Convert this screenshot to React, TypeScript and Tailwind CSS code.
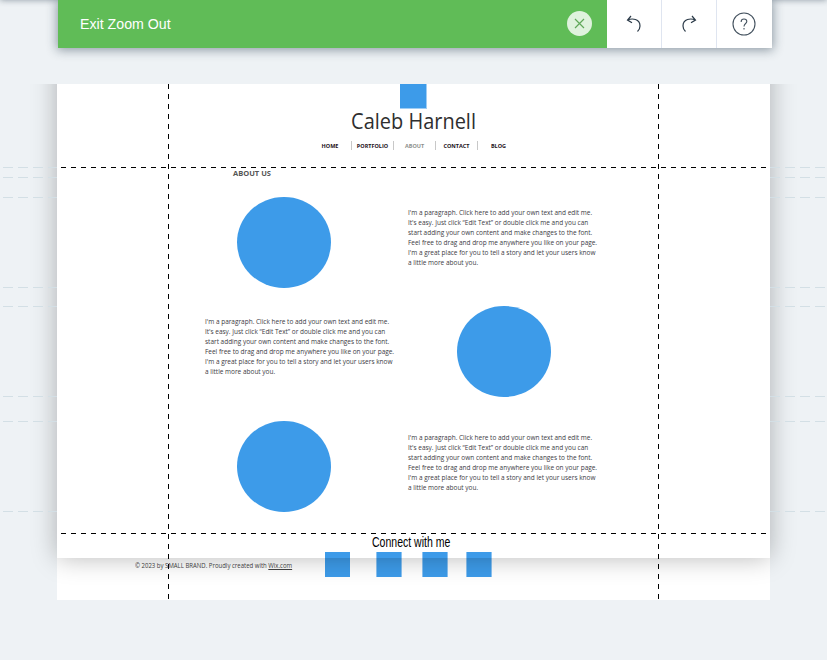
import type { ReactNode } from "react";

const LINES = [
  "I'm a paragraph. Click here to add your own text and edit me.",
  "It's easy. Just click “Edit Text” or double click me and you can",
  "start adding your own content and make changes to the font.",
  "Feel free to drag and drop me anywhere you like on your page.",
  "I'm a great place for you to tell a story and let your users know",
  "a little more about you.",
];

const GUIDES = [83, 93, 113, 203, 222, 312, 337, 427];

function Paragraph() {
  return (
    <div className="w-[192px] whitespace-nowrap text-[6.47px] leading-[10px] text-[#3c3c44]">
      {LINES.map((line) => (
        <p key={line}>{line}</p>
      ))}
    </div>
  );
}

function Circle() {
  return <div className="mr-[0.5px] h-[91px] w-[93.5px] shrink-0 rounded-[50%] bg-[#3d9be9]" />;
}

function ToolButton({ children, last = false }: { children: ReactNode; last?: boolean }) {
  return (
    <button
      className={
        last
          ? "flex h-12 flex-1 items-center justify-center bg-white pr-px pb-px"
          : "flex h-12 w-[55px] items-center justify-center border-r border-[#dfe5f0] bg-white pb-px"
      }
    >
      {children}
    </button>
  );
}

function TopBar() {
  return (
    <header className="relative z-10 ml-[58px] flex h-12 w-[714px] shadow-[0_1px_10px_1px_rgba(22,45,61,0.45)]">
      <div className="flex w-[549px] items-center justify-between bg-[#60bc57] pr-[15px] pl-[22px]">
        <span className="font-['Liberation_Sans',sans-serif] text-[14.2px] leading-5 text-white">Exit Zoom Out</span>
        <span className="mb-[2px] flex size-[25px] items-center justify-center rounded-full bg-[#dff2dd]">
          <svg width="11" height="11" viewBox="0 0 11 11" fill="none" stroke="#60a85a" strokeWidth="1.2">
            <path d="M1 1l9 9M10 1l-9 9" />
          </svg>
        </span>
      </div>
      <ToolButton>
        <svg width="16" height="18" viewBox="0 0 16 18" fill="none" stroke="#2b3a48" strokeWidth="1.2">
          <path d="M5 1L1.5 5L6 7.8M1.5 5C4 4 7 3.7 9.5 4.5C12.4 5.5 14 8 14 11C14 13.2 13.2 15 11.5 16.5" />
        </svg>
      </ToolButton>
      <ToolButton>
        <svg width="16" height="18" viewBox="0 0 16 18" fill="none" stroke="#2b3a48" strokeWidth="1.2">
          <path d="M11 1L14.5 5L10 7.8M14.5 5C12 4 9 3.7 6.5 4.5C3.6 5.5 2 8 2 11C2 13.2 2.8 15 4.5 16.5" />
        </svg>
      </ToolButton>
      <ToolButton last>
        <svg width="24" height="24" viewBox="0 0 24 24" fill="none" stroke="#43515e" strokeWidth="1.1">
          <circle cx="12" cy="12" r="11" />
          <path d="M9.2 10V9.5C9.2 8 10.3 7 12 7S14.8 8 14.8 9.5C14.8 11.5 12 11.6 12 14.5M12 16V17.4" />
        </svg>
      </ToolButton>
    </header>
  );
}

function SiteHeader() {
  return (
    <div className="flex h-[83px] flex-col items-center">
      <div className="h-[25px] w-[27px] border-r border-b border-[#9fcdf4] bg-[#3d9be9]" />
      <h1 className="ml-px scale-x-[0.925] text-[21.6px] leading-[24px] text-[#2e2e2e]">Caleb Harnell</h1>
      <nav className="mt-[8px] ml-px flex h-[9px] w-[210px] text-center text-[5.5px] leading-[11px] font-bold text-[#1c1018]">
        <span className="w-[42px]">HOME</span>
        <span className="w-[42px] border-l border-[#c8c8c8]">PORTFOLIO</span>
        <span className="w-[42px] border-l border-[#c8c8c8] text-[#8c908c]">ABOUT</span>
        <span className="w-[42px] border-l border-[#c8c8c8]">CONTACT</span>
        <span className="w-[42px] border-l border-[#c8c8c8]">BLOG</span>
      </nav>
    </div>
  );
}

export default function App() {
  return (
    <div className="relative h-[660px] w-[827px] overflow-hidden bg-[#eef2f5] font-['Open_Sans',sans-serif]">
      <div className="absolute -top-2 left-0 h-2 w-full shadow-[0_0_6px_rgba(22,45,61,0.45)]" />
      <TopBar />

      <main className="relative mt-9 h-[576px] overflow-hidden">
        <div className="ml-[57px] h-[516px] w-[713px] bg-white">
          <SiteHeader />
          <h2 className="ml-[176px] h-[30px] text-[7.5px] leading-[13px] font-bold text-[#555]">ABOUT US</h2>
          <div className="ml-[180px] flex h-[91px] items-center gap-[77px]">
            <Circle />
            <div className="pb-[10px]"><Paragraph /></div>
          </div>
          <div className="mt-[18px] ml-[148px] flex h-[91px] items-center gap-[60px]">
            <div className="pb-[10px]"><Paragraph /></div>
            <Circle />
          </div>
          <div className="mt-6 ml-[180px] flex h-[91px] items-center gap-[77px]">
            <Circle />
            <div className="pb-[8px]"><Paragraph /></div>
          </div>
          <footer className="mt-[22px]">
            <div className="ml-[315px] h-[18px] w-[78px]">
              <p className="origin-left scale-x-[0.725] font-['Liberation_Sans',sans-serif] text-[14.5px] leading-[17px] whitespace-nowrap text-black">
                Connect with me
              </p>
            </div>
            <div className="flex pl-[78px]">
              <div className="w-[190px] pt-[9px]">
                <p className="origin-left scale-x-[0.924] text-[6.5px] leading-[10px] whitespace-nowrap text-[#444]">
                  © 2023 by SMALL BRAND. Proudly created with <u>Wix.com</u>
                </p>
              </div>
              <div className="flex">
                <span className="size-[25px] bg-[#3d9be9]" />
                <span className="ml-[26px] h-[25px] w-[26px] border-x border-[#8cc3f2] bg-[#3d9be9]" />
                <span className="ml-[20px] h-[25px] w-[26px] border-x border-[#8cc3f2] bg-[#3d9be9]" />
                <span className="ml-[18px] h-[25px] w-[26px] border-x border-[#8cc3f2] bg-[#3d9be9]" />
              </div>
            </div>
          </footer>
        </div>

        <div className="pointer-events-none absolute -top-12 left-[57px] h-[522px] w-[713px] shadow-[0_0_24px_rgba(0,0,0,0.28)]" />
        {GUIDES.map((top) => (
          <div key={top} className="absolute inset-x-0 flex justify-between" style={{ top }}>
            <i className="ml-[3px] h-px w-[54px] bg-[repeating-linear-gradient(90deg,#d3dfe5_0_10px,transparent_10px_15px)]" />
            <i className="h-px w-[57px] bg-[repeating-linear-gradient(90deg,#d3dfe5_0_10px,transparent_10px_15px)]" />
          </div>
        ))}
        <div className="absolute top-[83px] left-[61px] h-px w-[706px] bg-[repeating-linear-gradient(90deg,#000_0_5px,transparent_5px_10px)]" />
        <div className="absolute top-[449px] left-[61px] h-px w-[706px] bg-[repeating-linear-gradient(90deg,#000_0_5px,transparent_5px_10px)]" />
        <div className="absolute top-0 left-[168px] h-[515px] w-px bg-[repeating-linear-gradient(180deg,#000_0_5px,transparent_5px_10px)]" />
        <div className="absolute top-0 left-[658px] h-[515px] w-px bg-[repeating-linear-gradient(180deg,#000_0_5px,transparent_5px_10px)]" />
      </main>
    </div>
  );
}
